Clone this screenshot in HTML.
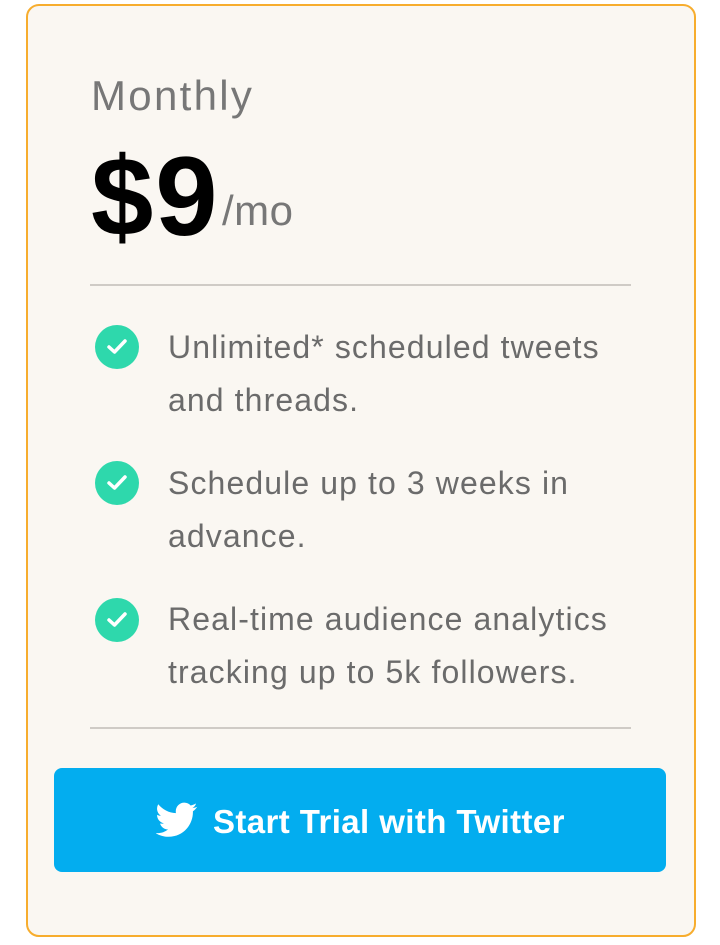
<!DOCTYPE html>
<html><head><meta charset="utf-8"><style>
html,body{margin:0;padding:0;width:720px;height:945px;background:#fff;overflow:hidden;font-family:"Liberation Sans",Arial,sans-serif}
.card{position:absolute;left:26px;top:4px;width:666px;height:929px;border:2px solid #f7ad2e;border-radius:13px;background:#faf7f2}
.t{position:absolute;white-space:nowrap}
.monthly{left:91px;top:72px;font-size:42px;color:#777;letter-spacing:2.3px}
.price{left:91px;top:132px;font-size:112px;font-weight:bold;color:#000;letter-spacing:2px}
.mo{left:222px;top:187px;font-size:42px;color:#777;letter-spacing:0.5px}
.hr{position:absolute;left:90px;width:541px;height:1.5px;background:#cfcbc6}
.chk{position:absolute;left:95px;width:44px;height:44px;border-radius:50%;background:#2ed8ac}
.chk svg{position:absolute;left:12px;top:13px}
.li{left:168px;font-size:32px;color:#6b6b6b;line-height:53px;letter-spacing:1.1px}
.btn{position:absolute;left:54px;top:768px;width:612px;height:104px;border-radius:8px;background:#03adef}
.btn span{position:absolute;left:159px;top:35px;font-size:33px;font-weight:bold;color:#fff;white-space:nowrap;letter-spacing:0.4px}
.btn svg{position:absolute;left:102px;top:34px}
</style></head><body>
<div class="card"></div>
<div class="t monthly">Monthly</div>
<div class="t price">$9</div>
<div class="t mo">/mo</div>
<div class="hr" style="top:284px"></div>

<div class="chk" style="top:325px"><svg width="20" height="18" viewBox="0 0 20 18"><path d="M2 9 L7.5 14 L18 3" stroke="#fff" stroke-width="3.5" fill="none" stroke-linecap="round" stroke-linejoin="round"/></svg></div>
<div class="t li" style="top:321px">Unlimited* scheduled tweets<br>and threads.</div>

<div class="chk" style="top:461px"><svg width="20" height="18" viewBox="0 0 20 18"><path d="M2 9 L7.5 14 L18 3" stroke="#fff" stroke-width="3.5" fill="none" stroke-linecap="round" stroke-linejoin="round"/></svg></div>
<div class="t li" style="top:457px">Schedule up to 3 weeks in<br>advance.</div>

<div class="chk" style="top:598px"><svg width="20" height="18" viewBox="0 0 20 18"><path d="M2 9 L7.5 14 L18 3" stroke="#fff" stroke-width="3.5" fill="none" stroke-linecap="round" stroke-linejoin="round"/></svg></div>
<div class="t li" style="top:593px">Real-time audience analytics<br>tracking up to 5k followers.</div>

<div class="hr" style="top:727px"></div>

<div class="btn">
<svg width="42" height="36" viewBox="0 0 24 20"><path fill="#fff" d="M23.6 2.4c-.9.4-1.8.6-2.8.8 1-.6 1.8-1.5 2.1-2.7-.9.6-2 1-3.1 1.2C18.9.7 17.6.1 16.2.1c-2.7 0-4.9 2.2-4.9 4.9 0 .4 0 .8.1 1.1C7.3 5.9 3.7 4 1.3 1 .9 1.7.6 2.6.6 3.5c0 1.7.9 3.2 2.2 4.1-.8 0-1.6-.2-2.2-.6v.1c0 2.4 1.7 4.4 3.9 4.8-.4.1-.8.2-1.3.2-.3 0-.6 0-.9-.1.6 2 2.4 3.4 4.6 3.4-1.7 1.3-3.8 2.1-6.1 2.1-.4 0-.8 0-1.2-.1 2.2 1.4 4.8 2.2 7.5 2.2 9.1 0 14-7.5 14-14v-.6c1-.7 1.8-1.6 2.5-2.6z"/></svg>
<span>Start Trial with Twitter</span>
</div>
</body></html>
